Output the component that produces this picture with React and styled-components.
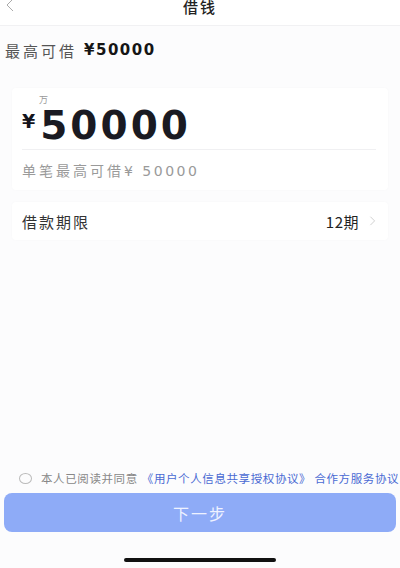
import React from 'react';
import styled, { createGlobalStyle } from 'styled-components';

const GlobalStyle = createGlobalStyle`
  html, body {
    margin: 0;
    padding: 0;
    background: #fcfcfd;
  }
  body {
    font-family: "Noto Sans CJK SC", "Noto Sans", sans-serif;
    -webkit-font-smoothing: antialiased;
  }
`;

const Page = styled.div`
  display: flex;
  flex-direction: column;
  height: 568px;
  overflow: hidden;
`;

const Header = styled.div`
  position: relative;
  height: 25px;
  display: flex;
  justify-content: center;
  align-items: flex-start;
  background: #fff;
  border-bottom: 1px solid #f1f1f3;
`;

const BackButton = styled.div`
  position: absolute;
  left: 5px;
  top: -2px;
  width: 10px;
  height: 14px;
  display: flex;
`;

const Title = styled.div`
  font-size: 15px;
  line-height: 13px;
  font-weight: 500;
  letter-spacing: 2px;
  color: #222;
`;

const Summary = styled.div`
  margin: 14px 0 0 5px;
  height: 20px;
  display: flex;
  align-items: center;
  gap: 7px;
`;

const SummaryLabel = styled.span`
  font-size: 15px;
  letter-spacing: 3px;
  color: #555;
`;

const SummaryValue = styled.span`
  font-family: "DejaVu Sans", sans-serif;
  font-weight: 700;
  font-size: 15px;
  letter-spacing: 1.5px;
  color: #151515;
`;

const Card = styled.div`
  margin: ${({ $top }) => $top}px 12px 0;
  background: #fff;
  border-radius: 4px;
  box-shadow: 0 0 3px rgba(0, 0, 0, 0.025);
`;

const AmountCard = styled(Card)`
  padding: 7px 12px 10px 10px;
`;

const Unit = styled.div`
  padding-left: 17px;
  font-size: 9px;
  line-height: 10px;
  color: #999;
`;

const AmountRow = styled.div`
  display: flex;
  align-items: flex-start;
  height: 40px;
  margin-top: 1px;
`;

const Yen = styled.span`
  font-family: "DejaVu Sans", sans-serif;
  font-weight: 700;
  font-size: 19px;
  line-height: 20px;
  margin-top: 5px;
  margin-right: 5px;
  color: #14141c;
`;

const Amount = styled.span`
  font-family: "DejaVu Sans", sans-serif;
  font-weight: 700;
  font-size: 39px;
  line-height: 40px;
  letter-spacing: 3px;
  color: #1a1a22;
`;

const Divider = styled.div`
  margin-top: 3px;
  height: 1px;
  background: #f0f0f2;
`;

const Hint = styled.div`
  margin-top: 11px;
  font-size: 14px;
  line-height: 18px;
  letter-spacing: 3px;
  color: #9a9a9a;
`;

const HintNumber = styled.span`
  font-family: "DejaVu Sans", sans-serif;
  letter-spacing: 2.5px;
`;

const TermRow = styled(Card)`
  height: 38px;
  padding: 0 12px 0 10px;
  display: flex;
  align-items: center;
  justify-content: space-between;
`;

const TermLabel = styled.span`
  font-size: 15px;
  letter-spacing: 2px;
  color: #333;
`;

const TermValue = styled.span`
  display: flex;
  align-items: center;
  gap: 10px;
  font-size: 15px;
  letter-spacing: 0.5px;
  color: #222;
`;

const Spacer = styled.div`
  flex: 1;
`;

const Agreement = styled.div`
  display: flex;
  align-items: center;
  height: 16px;
  padding-left: 19px;
  white-space: nowrap;
  overflow: hidden;
  font-size: 11.5px;
  letter-spacing: 0.6px;
  color: #888;
`;

const Radio = styled.span`
  flex: none;
  width: 11px;
  height: 9px;
  border: 1px solid #bbb;
  border-radius: 50%;
  margin-right: 9px;
`;

const Link = styled.span`
  color: #4a6ad3;
  margin-left: 4px;
`;

const NextButton = styled.button`
  margin: 7px 4px 0;
  height: 39px;
  border: none;
  border-radius: 8px;
  background: #8eabf7;
  color: #eef2ff;
  font-family: "Noto Sans CJK SC", sans-serif;
  font-size: 16px;
  letter-spacing: 2px;
`;

const HomeIndicator = styled.div`
  align-self: center;
  margin: 26px 0 6px;
  width: 152px;
  height: 4px;
  border-radius: 2px;
  background: #111;
`;

const Chevron = ({ dir = 'left', size = 10, color = '#999' }) => (
  <svg width={size} height={size * 1.4} viewBox="0 0 10 14" fill="none">
    {dir === 'left' ? (
      <polyline points="8,1 2,7 8,13" stroke={color} strokeWidth="1" />
    ) : (
      <polyline points="2,1 8,7 2,13" stroke={color} strokeWidth="1" />
    )}
  </svg>
);

export default function App() {
  return (
    <>
      <GlobalStyle />
      <Page>
        <Header>
          <BackButton>
            <Chevron dir="left" color="#aaa" />
          </BackButton>
          <Title>借钱</Title>
        </Header>

        <Summary>
          <SummaryLabel>最高可借</SummaryLabel>
          <SummaryValue>¥50000</SummaryValue>
        </Summary>

        <AmountCard $top={28}>
          <Unit>万</Unit>
          <AmountRow>
            <Yen>¥</Yen>
            <Amount>50000</Amount>
          </AmountRow>
          <Divider />
          <Hint>
            单笔最高可借<HintNumber>¥ 50000</HintNumber>
          </Hint>
        </AmountCard>

        <TermRow $top={12}>
          <TermLabel>借款期限</TermLabel>
          <TermValue>
            12期
            <Chevron dir="right" size={7} color="#bbb" />
          </TermValue>
        </TermRow>

        <Spacer />

        <Agreement>
          <Radio />
          本人已阅读并同意
          <Link>《用户个人信息共享授权协议》 合作方服务协议</Link>
        </Agreement>
        <NextButton>下一步</NextButton>
        <HomeIndicator />
      </Page>
    </>
  );
}
